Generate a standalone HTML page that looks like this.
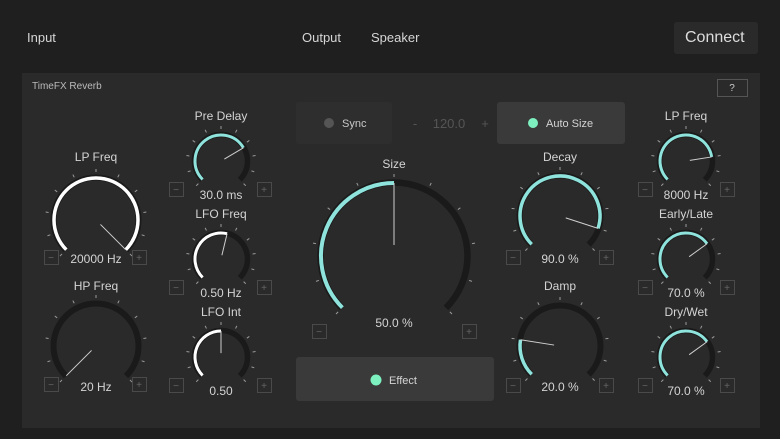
<!DOCTYPE html>
<html><head><meta charset="utf-8"><style>
html,body{margin:0;padding:0;width:780px;height:439px;background:#1f1f1f;overflow:hidden;font-family:"Liberation Sans",sans-serif;color:#ddd}
.t{position:absolute;font-size:13px;color:#d6d6d6}
#panel{position:absolute;left:22px;top:73px;width:738px;height:355px;background:#2a2a2a}
.btn{position:absolute;border-radius:3px}
svg{position:absolute;left:0;top:0}
</style></head><body>
<div class="t" style="left:27px;top:30px">Input</div>
<div class="t" style="left:302px;top:30px">Output</div>
<div class="t" style="left:371px;top:30px">Speaker</div>
<div class="btn" style="left:674px;top:22px;width:84px;height:32px;background:#2a2a2a"></div>
<div class="t" style="left:685px;top:29px;font-size:16px;color:#ddd">Connect</div>
<div id="panel"></div>
<div class="t" style="left:32px;top:81px;font-size:10px;color:#bbb">TimeFX Reverb</div>
<div class="btn" style="left:296px;top:102px;width:96px;height:42px;background:#2e2e2e"></div>
<div class="btn" style="left:497px;top:102px;width:128px;height:42px;background:#3a3a3a"></div>
<div class="btn" style="left:296px;top:357px;width:198px;height:44px;background:#3a3a3a"></div>
<svg width="780" height="439" id="s"></svg>
<script>
var s=document.getElementById('s'),h='';
function T(x,y,txt,sz,c,a){h+='<text x="'+x+'" y="'+y+'" font-size="'+(sz||11)+'" fill="'+(c||'#d4d4d4')+'" text-anchor="'+(a||'middle')+'" font-family="Liberation Sans, sans-serif">'+txt+'</text>';}
function P(cx,cy,r,a){var rad=(a-90)*Math.PI/180;return [cx+r*Math.cos(rad),cy+r*Math.sin(rad)];}
function arc(cx,cy,r,a1,a2,c,w){if(a2-a1<0.5)return;var p1=P(cx,cy,r,a1),p2=P(cx,cy,r,a2);h+='<path d="M'+p1[0]+' '+p1[1]+' A'+r+' '+r+' 0 '+((a2-a1)>180?1:0)+' 1 '+p2[0]+' '+p2[1]+'" fill="none" stroke="'+c+'" stroke-width="'+w+'"/>';}
function box(x,y,t){h+='<rect x="'+(x+0.5)+'" y="'+(y+0.5)+'" width="14" height="14" fill="none" stroke="#4a4a4a"/>';T(x+7,y+11,t,10,'#666');}
function knob(cx,cy,r,v,col,label,val,ly,vy,by,bx1,bx2,w){
 w=w||(r>35?3.5:3);
 for(var i=0;i<11;i++){var a=-135+27*i,p1=P(cx,cy,r+6,a),p2=P(cx,cy,r+9,a);h+='<line x1="'+p1[0]+'" y1="'+p1[1]+'" x2="'+p2[0]+'" y2="'+p2[1]+'" stroke="#9a9a9a" stroke-width="1"/>';}
 var av=-135+270*v;
 arc(cx,cy,r+0.5,-135,135,'#1a1a1a',w+2.5);
 arc(cx,cy,r,-135,av,col,w);
 var p=P(cx,cy,r,av),q=P(cx,cy,r*0.15,av);
 h+='<line x1="'+q[0]+'" y1="'+q[1]+'" x2="'+p[0]+'" y2="'+p[1]+'" stroke="#cfcfcf" stroke-width="1"/>';
 T(cx,ly,label,12);T(cx,vy,val,12);
 box(bx1,by,'−');box(bx2,by,'+');
}
var W='#ffffff',C='#8ee3dc';
knob(96,220,42,1.0,W,'LP Freq','20000 Hz',161,263,250,44,132);
knob(96,346,42,0.0,W,'HP Freq','20 Hz',290,391,377,44,132);
knob(221,161,26,0.72,C,'Pre Delay','30.0 ms',120,199,182,169,257);
knob(221,259,26,0.55,W,'LFO Freq','0.50 Hz',218,297,280,169,257);
knob(221,357,26,0.5,W,'LFO Int','0.50',316,395,378,169,257);
knob(394,256,73,0.5,C,'Size','50.0 %',168,327,324,312,462,4);
knob(560,216,40,0.9,C,'Decay','90.0 %',161,263,250,506,599);
knob(560,346,40,0.2,C,'Damp','20.0 %',290,391,378,506,599);
knob(686,161,26,0.8,C,'LP Freq','8000 Hz',120,199,182,638,720);
knob(686,259,26,0.7,C,'Early/Late','70.0 %',218,297,280,638,720);
knob(686,357,26,0.7,C,'Dry/Wet','70.0 %',316,395,378,638,720);
h+='<circle cx="329" cy="123" r="5" fill="#555"/>';T(342,127,'Sync',11,'#c8c8c8','start');
T(415,128,'-',13,'#555');T(449,128,'120.0',13,'#555');T(485,128,'+',13,'#555');
h+='<circle cx="533" cy="123" r="5" fill="#7ef0c0"/>';T(546,127,'Auto Size',11,'#d4d4d4','start');
h+='<circle cx="376" cy="380" r="5.5" fill="#7ef0c0"/>';T(389,384,'Effect',11,'#d4d4d4','start');
h+='<rect x="717.5" y="79.5" width="30" height="17" fill="none" stroke="#555"/>';T(732,91,'?',10,'#ccc');
s.innerHTML=h;
</script>
</body></html>
